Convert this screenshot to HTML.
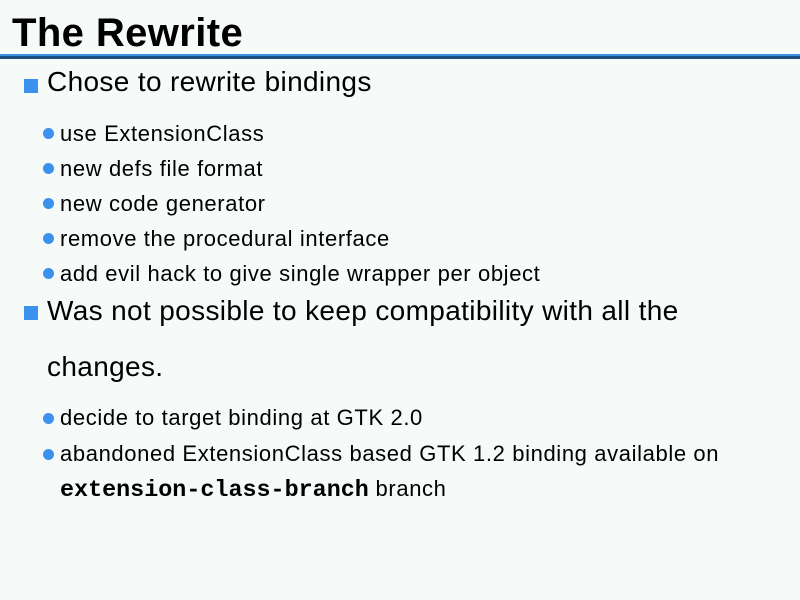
<!DOCTYPE html>
<html><head><meta charset="utf-8"><style>
body{margin:0;width:800px;height:600px;background:#f6faf8;position:relative;overflow:hidden;font-family:"Liberation Sans",sans-serif;color:#000}
.t{position:absolute;white-space:nowrap}
.h{left:12px;top:11px;font-size:40px;font-weight:bold;line-height:44px;letter-spacing:0.4px}
.l1{position:absolute;left:0;top:54px;width:800px;height:2px;background:#3c8ee0}
.l2{position:absolute;left:0;top:56px;width:800px;height:3px;background:#1a4e80}
.sq{position:absolute;left:24px;width:14px;height:14px;background:#3b91ee}
.m{left:47px;font-size:28px;line-height:30px;letter-spacing:0.35px}
.dot{position:absolute;left:43px;width:11px;height:11px;border-radius:50%;background:#3b91ee}
.s{left:60px;font-size:22px;line-height:24px;letter-spacing:0.62px}
.mono{font-family:"Liberation Mono",monospace;font-weight:bold;font-size:23.4px;letter-spacing:0}
</style></head><body>
<div class="t h">The Rewrite</div>
<div class="l1"></div><div class="l2"></div>
<div class="sq" style="top:79px"></div>
<div class="t m" style="top:67px">Chose to rewrite bindings</div>
<div class="dot" style="top:128px"></div><div class="t s" style="top:122px">use ExtensionClass</div>
<div class="dot" style="top:163px"></div><div class="t s" style="top:157px">new defs file format</div>
<div class="dot" style="top:198px"></div><div class="t s" style="top:192px">new code generator</div>
<div class="dot" style="top:233px"></div><div class="t s" style="top:227px">remove the procedural interface</div>
<div class="dot" style="top:268px"></div><div class="t s" style="top:262px">add evil hack to give single wrapper per object</div>
<div class="sq" style="top:306px"></div>
<div class="t m" style="top:296px">Was not possible to keep compatibility with all the</div>
<div class="t m" style="top:352px">changes.</div>
<div class="dot" style="top:413px"></div><div class="t s" style="top:406px">decide to target binding at GTK 2.0</div>
<div class="dot" style="top:449px"></div><div class="t s" style="top:442px">abandoned ExtensionClass based GTK 1.2 binding available on</div>
<div class="t s" style="top:477px"><span class="mono">extension-class-branch</span> branch</div>
</body></html>
